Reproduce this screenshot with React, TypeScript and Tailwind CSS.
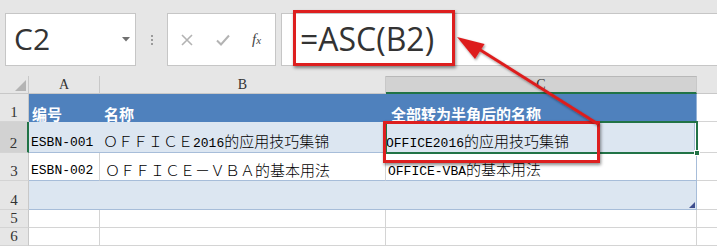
import React from "react";

const LATIN = "font-['Liberation_Mono',monospace] font-normal text-[13px]";
const CJK = "font-['Noto_Sans_CJK_SC',sans-serif] font-light text-[15px]";

function Mixed({ text }: { text: string }) {
  const parts = text.split(/([\x00-\x7f]+)/).filter((p) => p.length > 0);
  return (
    <span className="whitespace-nowrap leading-none font-normal">
      {parts.map((p, i) =>
        /^[\x00-\x7f]+$/.test(p) ? (
          <span key={i} className={LATIN}>
            {p}
          </span>
        ) : (
          <span key={i} className={CJK}>
            {p}
          </span>
        )
      )}
    </span>
  );
}

function RowHead({ n, h, selected }: { n: number; h: string; selected?: boolean }) {
  return (
    <div
      className={`${h} w-[29px] shrink-0 flex items-end justify-center pb-[1px] border-b border-[#d4d4d4] ${
        selected ? "bg-[#d2d2d2] border-r-2 border-r-[#217346]" : "bg-[#e6e6e6] border-r border-r-[#c8c8c8]"
      } font-['Liberation_Serif',serif] text-[15px] leading-none text-[#333]`}
    >
      {n}
    </div>
  );
}

export default function App() {
  return (
    <div className="relative w-[717px] h-[246px] overflow-hidden bg-white">
      {/* Formula bar */}
      <div className="h-[76px] bg-[#e6e6e6] flex items-start pt-[13px] pl-[5px]">
        <div className="w-[131px] h-[53px] bg-white border border-[#c6c6c6] flex items-center pl-[8px] pr-[5px]">
          <span className="font-['Open_Sans',sans-serif] text-[30px] leading-none text-[#333] flex-1 pb-[2px]">C2</span>
          <svg width="8" height="5" viewBox="0 0 8 5">
            <path d="M0 0 L8 0 L4 4.5 Z" fill="#707070" />
          </svg>
        </div>
        <div className="w-[31px] h-[53px] flex flex-col items-center justify-center gap-[2px]">
          <span className="w-[2px] h-[2px] bg-[#9a9a9a]" />
          <span className="w-[2px] h-[2px] bg-[#9a9a9a]" />
          <span className="w-[2px] h-[2px] bg-[#9a9a9a]" />
        </div>
        <div className="w-[109px] h-[53px] bg-white border border-[#c6c6c6] flex items-center pl-[13px]">
          <svg width="12" height="12" viewBox="0 0 12 12">
            <path d="M1 1 L11 11 M11 1 L1 11" stroke="#b3b3b3" strokeWidth="1.6" />
          </svg>
          <svg width="14" height="12" viewBox="0 0 14 12" className="ml-[23px]">
            <path d="M1 6.5 L5 10.5 L13 1.5" stroke="#b3b3b3" strokeWidth="2" fill="none" />
          </svg>
          <span className="ml-[22px] font-['Liberation_Serif',serif] italic text-[15px] leading-none text-[#444]">
            f<span className="text-[11px]">x</span>
          </span>
        </div>
        <div className="ml-[5px] flex-1 h-[53px] bg-white border border-[#c6c6c6] border-r-0 flex items-center pl-[18px]">
          <span className="font-['Open_Sans',sans-serif] text-[32px] leading-none text-[#333] pb-[1px]">=ASC(B2)</span>
        </div>
      </div>

      {/* Column headers */}
      <div className="flex h-[18px]">
        <div className="w-[29px] shrink-0 bg-[#e6e6e6] border-r border-b border-[#c8c8c8] relative">
          <svg className="absolute right-[2px] bottom-[2px]" width="11" height="11" viewBox="0 0 11 11">
            <path d="M11 0 L11 11 L0 11 Z" fill="#b4b4b4" />
          </svg>
        </div>
        <div className="w-[71px] shrink-0 bg-[#e6e6e6] border-r border-b border-[#c8c8c8] flex items-end justify-center font-['Liberation_Serif',serif] text-[14px] leading-none text-[#333] pb-[1px]">
          A
        </div>
        <div className="w-[286px] shrink-0 bg-[#e6e6e6] border-r border-b border-[#c8c8c8] flex items-end justify-center font-['Liberation_Serif',serif] text-[14px] leading-none text-[#333] pb-[1px]">
          B
        </div>
        <div className="w-[311px] shrink-0 bg-[#d2d2d2] border-t border-t-[#b8b8b8] border-r border-r-[#c8c8c8] border-b-2 border-b-[#217346] flex items-end justify-center font-['Liberation_Serif',serif] text-[14px] leading-none text-[#333]">
          C
        </div>
        <div className="flex-1 bg-[#e6e6e6] border-b border-[#c8c8c8]" />
      </div>

      {/* Row 1 */}
      <div className="flex h-[28px]">
        <RowHead n={1} h="h-[28px]" />
        <div className="w-[71px] shrink-0 bg-[#4f81bd] flex items-end pl-[3px] text-white font-bold font-['Noto_Sans_CJK_SC',sans-serif] text-[15px] leading-none pb-[1px]">
          编号
        </div>
        <div className="w-[286px] shrink-0 bg-[#4f81bd] flex items-end pl-[4px] text-white font-bold font-['Noto_Sans_CJK_SC',sans-serif] text-[15px] leading-none pb-[1px]">
          名称
        </div>
        <div className="w-[311px] shrink-0 bg-[#4f81bd] border-r border-[#95b3d7] flex items-end pl-[5px] text-white font-bold font-['Noto_Sans_CJK_SC',sans-serif] text-[15px] leading-none pb-[1px]">
          全部转为半角后的名称
        </div>
        <div className="flex-1 border-b border-[#d4d4d4]" />
      </div>

      {/* Row 2 */}
      <div className="flex h-[31px]">
        <RowHead n={2} h="h-[31px]" selected />
        <div className="w-[69px] shrink-0 bg-[#dce6f1] border-b border-[#a7bdd9] flex items-end pl-[2px] pb-[3px] text-black">
          <Mixed text="ESBN-001" />
        </div>
        <div className="w-[286px] shrink-0 bg-[#dce6f1] border-b border-[#a7bdd9] flex items-end pl-[5px] pb-[2px] text-black">
          <Mixed text="ＯＦＦＩＣＥ2016的应用技巧集锦" />
        </div>
        <div className="w-[311px] shrink-0 bg-[#dce6f1] border-b border-r border-[#a7bdd9] flex items-end pl-[2px] pb-[2px] text-black">
          <Mixed text="OFFICE2016的应用技巧集锦" />
        </div>
        <div className="flex-1 border-b border-[#d4d4d4]" />
      </div>

      {/* Row 3 */}
      <div className="flex h-[28px]">
        <RowHead n={3} h="h-[28px]" />
        <div className="w-[71px] shrink-0 bg-white border-r border-r-[#d4d4d4] border-b border-b-[#a7bdd9] flex items-end pl-[2px] pb-[3px] text-black">
          <Mixed text="ESBN-002" />
        </div>
        <div className="w-[286px] shrink-0 bg-white border-r border-r-[#d4d4d4] border-b border-b-[#a7bdd9] flex items-end pl-[5px] pb-[2px] text-black">
          <Mixed text="ＯＦＦＩＣＥ－ＶＢＡ的基本用法" />
        </div>
        <div className="w-[311px] shrink-0 bg-white border-b border-r border-[#a7bdd9] flex items-end pl-[2px] pb-[2px] text-black">
          <Mixed text="OFFICE-VBA的基本用法" />
        </div>
        <div className="flex-1 border-b border-[#d4d4d4]" />
      </div>

      {/* Row 4 */}
      <div className="flex h-[29px]">
        <RowHead n={4} h="h-[29px]" />
        <div className="w-[71px] shrink-0 bg-[#dce6f1] border-b border-[#a7bdd9]" />
        <div className="w-[286px] shrink-0 bg-[#dce6f1] border-b border-[#a7bdd9]" />
        <div className="w-[311px] shrink-0 bg-[#dce6f1] border-b border-r border-[#a7bdd9] relative">
          <svg className="absolute right-[1px] bottom-[1px]" width="6" height="6" viewBox="0 0 6 6">
            <path d="M6 0 L6 6 L0 6 Z" fill="#3f4f8f" />
          </svg>
        </div>
        <div className="flex-1 border-b border-[#d4d4d4]" />
      </div>

      {/* Rows 5, 6 */}
      {[5, 6].map((n) => (
        <div key={n} className="flex h-[18px]">
          <RowHead n={n} h="h-[18px]" />
          <div className="w-[71px] shrink-0 border-r border-b border-[#d4d4d4]" />
          <div className="w-[286px] shrink-0 border-r border-b border-[#d4d4d4]" />
          <div className="w-[311px] shrink-0 border-r border-b border-[#d4d4d4]" />
          <div className="flex-1 border-b border-[#d4d4d4]" />
        </div>
      ))}

      {/* Selection around C2 */}
      <div className="absolute left-[385px] top-[121px] w-[313px] h-[33px] border-2 border-[#217346] pointer-events-none" />
      <div className="absolute left-[694px] top-[150px] w-[6px] h-[6px] bg-[#217346] border border-white pointer-events-none" />

      {/* Red annotation boxes */}
      <div className="absolute left-[293px] top-[10px] w-[162px] h-[56px] border-[3px] border-[#dd1f1f] shadow-[1px_2px_3px_rgba(0,0,0,0.45)] pointer-events-none" />
      <div className="absolute left-[383px] top-[121px] w-[217px] h-[42px] border-[3px] border-[#dd1f1f] shadow-[1px_2px_3px_rgba(0,0,0,0.45)] pointer-events-none" />

      {/* Arrow */}
      <svg className="absolute left-0 top-0 pointer-events-none" width="717" height="246" viewBox="0 0 717 246">
        <defs>
          <filter id="sh" x="-10%" y="-10%" width="120%" height="120%">
            <feDropShadow dx="1" dy="1.5" stdDeviation="1" floodColor="#000" floodOpacity="0.4" />
          </filter>
        </defs>
        <g filter="url(#sh)">
          <line x1="598" y1="124" x2="474" y2="46" stroke="#dd1f1f" strokeWidth="3" />
          <polygon points="457,37 484.6,43.9 475,59.1" fill="#dd1f1f" />
        </g>
      </svg>
    </div>
  );
}
